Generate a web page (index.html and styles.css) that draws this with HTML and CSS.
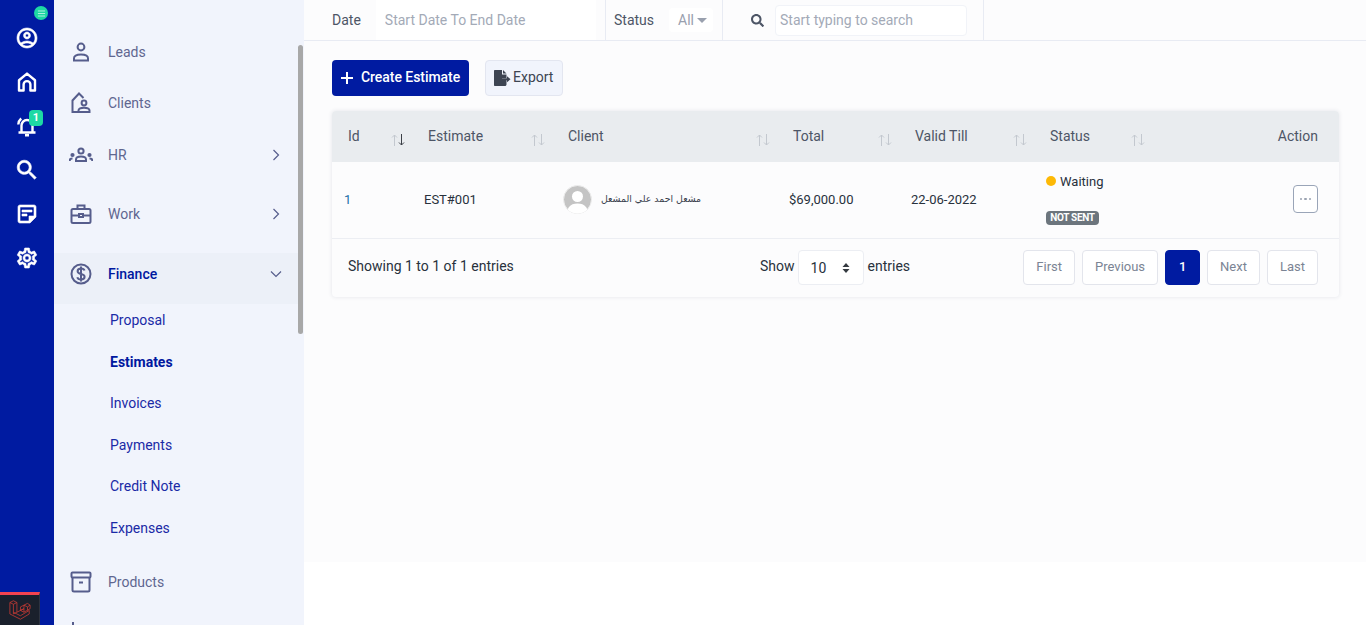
FILE: index.html
```html
<!DOCTYPE html>
<html lang="en">

<head>
    <meta charset="UTF-8">
    <meta name="viewport" content="width=device-width, initial-scale=1.0">
    <title>Estimates</title>
    <link rel="stylesheet" href="styles.css">
</head>

<body>
    <nav class="rail">
        <span class="rail-toggle">
            <svg viewBox="0 0 10 10" width="10" height="10"><path d="M1 2.2h8M1 5h8M1 7.8h8" stroke="#fff" stroke-opacity=".65" stroke-width="1.1"/></svg>
        </span>
        <a class="rail-link" href="#">
            <svg viewBox="0 0 24 24" width="24" height="24"><path class="solid" d="M12 2C6.48 2 2 6.48 2 12s4.48 10 10 10 10-4.48 10-10S17.52 2 12 2zM7.35 18.5C8.66 17.56 10.26 17 12 17s3.34.56 4.65 1.5C15.34 19.44 13.74 20 12 20s-3.34-.56-4.65-1.5zm10.79-1.38C16.45 15.8 14.32 15 12 15s-4.45.8-6.14 2.12C4.7 15.73 4 13.95 4 12c0-4.42 3.58-8 8-8s8 3.58 8 8c0 1.95-.7 3.73-1.86 5.12zM12 6c-1.93 0-3.5 1.57-3.5 3.5S10.07 13 12 13s3.5-1.57 3.5-3.5S13.93 6 12 6zm0 5c-.83 0-1.5-.67-1.5-1.5S11.17 8 12 8s1.5.67 1.5 1.5S12.83 11 12 11z"/></svg>
        </a>
        <a class="rail-link" href="#">
            <svg viewBox="0 0 24 24" width="24" height="24"><path class="line" d="M4 20.5V10.2L12 3.6l8 6.6v10.3h-4.6v-6a3.4 3.4 0 0 0-6.800 0v6z"/></svg>
        </a>
        <a class="rail-link" href="#">
            <svg viewBox="0 0 24 24" width="24" height="24"><path class="line" d="M6.500 18v-6.500a5.500 5.500 0 0 1 11 0V18M3.500 18.500h17M10 21.300h4M6.200 4.500C4.500 6 3.500 8 3.300 10.500M17.800 4.500c1.700 1.500 2.700 3.500 2.900 6"/></svg>
            <span class="rail-badge">1</span>
        </a>
        <a class="rail-link" href="#">
            <svg viewBox="0 0 24 24" width="26" height="26"><path class="solid" d="M15.500 14h-.79l-.28-.27C15.410 12.590 16 11.110 16 9.500 16 5.910 13.090 3 9.500 3S3 5.910 3 9.500 5.910 16 9.500 16c1.610 0 3.090-.59 4.230-1.570l.27.280v.79l5 4.990L20.490 19l-4.990-5zm-6 0C7.010 14 5 11.990 5 9.500S7.010 5 9.500 5 14 7.010 14 9.500 11.990 14 9.500 14z"/></svg>
        </a>
        <a class="rail-link" href="#">
            <svg viewBox="0 0 24 24" width="24" height="24"><path class="solid" d="M19 5v9h-5v5H5V5h14m0-2H5c-1.100 0-2 .9-2 2v14c0 1.100.9 2 2 2h10l6-6V5c0-1.100-.9-2-2-2zm-7 11H7v-2h5v2zm5-4H7V8h10v2z"/></svg>
        </a>
        <a class="rail-link" href="#">
            <svg viewBox="0 0 24 24" width="24" height="24"><path class="solid" d="M19.430 12.980c.04-.32.07-.64.07-.98 0-.34-.03-.66-.07-.98l2.110-1.650c.19-.15.24-.42.12-.64l-2-3.460c-.09-.16-.26-.25-.44-.25-.06 0-.12.01-.17.03l-2.490 1c-.52-.4-1.080-.73-1.690-.98l-.38-2.650C14.460 2.180 14.250 2 14 2h-4c-.25 0-.46.18-.49.42l-.38 2.650c-.61.25-1.170.59-1.690.98l-2.490-1c-.06-.02-.12-.03-.18-.03-.17 0-.34.09-.43.25l-2 3.460c-.13.22-.07.49.12.64l2.110 1.650c-.04.32-.07.65-.07.98 0 .33.03.66.07.98l-2.110 1.650c-.19.15-.24.42-.12.64l2 3.460c.09.16.26.25.44.25.06 0 .12-.01.17-.03l2.490-1c.52.4 1.080.73 1.690.98l.38 2.650c.03.24.24.42.49.42h4c.25 0 .46-.18.49-.42l.38-2.650c.61-.25 1.170-.59 1.690-.98l2.490 1c.06.02.12.03.18.03.17 0 .34-.09.43-.25l2-3.460c.12-.22.07-.49-.12-.64l-2.110-1.650zm-1.980-1.710c.04.31.05.52.05.73 0 .21-.02.43-.05.73l-.14 1.130.89.7 1.080.84-.7 1.210-1.270-.51-1.040-.42-.9.68c-.43.32-.84.56-1.250.73l-1.060.43-.16 1.130-.2 1.350h-1.400l-.19-1.350-.16-1.130-1.060-.43c-.43-.18-.83-.41-1.230-.71l-.91-.7-1.060.43-1.270.51-.7-1.210 1.080-.84.89-.7-.14-1.130c-.03-.31-.05-.54-.05-.74s.02-.43.05-.73l.14-1.130-.89-.7-1.080-.84.7-1.210 1.270.51 1.040.42.9-.68c.43-.32.84-.56 1.250-.73l1.060-.43.16-1.130.2-1.350h1.390l.19 1.350.16 1.130 1.060.43c.43.18.83.41 1.230.71l.91.7 1.060-.43 1.270-.51.7 1.210-1.070.85-.89.7.14 1.130zM12 8c-2.210 0-4 1.790-4 4s1.790 4 4 4 4-1.790 4-4-1.790-4-4-4zm0 6c-1.100 0-2-.9-2-2s.9-2 2-2 2 .9 2 2-.9 2-2 2z"/></svg>
        </a>
    </nav>

    <aside class="side">
        <ul class="menu">
            <li class="menu-item">
                <svg class="menu-icon" viewBox="0 0 24 24"><circle cx="12" cy="7" r="3.400"/><path d="M5 20.500v-2.200c0-2.200 2-3.800 7-3.800s7 1.600 7 3.800v2.200z"/></svg>
                Leads
            </li>
            <li class="menu-item">
                <svg class="menu-icon" viewBox="0 0 24 24"><path d="M10 21H3.500V9.500L10 2.500l4.500 4.500"/><circle cx="15" cy="12" r="2.400"/><path d="M9.500 21v-1.500c0-1.700 2-2.800 5.500-2.800s5.500 1.100 5.500 2.800V21z"/></svg>
                Clients
            </li>
            <li class="menu-item">
                <svg class="menu-icon" viewBox="0 0 24 24"><circle cx="12" cy="8" r="2.600"/><path d="M7 18v-1.500c0-1.800 2-2.900 5-2.900s5 1.100 5 2.900V18z"/><circle cx="3.500" cy="12" r="1.100"/><circle cx="20.500" cy="12" r="1.100"/><path d="M.8 18v-.8c0-1 1-1.800 2.700-1.800M23.200 18v-.8c0-1-1-1.800-2.700-1.800"/></svg>
                HR
                <svg class="chev" viewBox="0 0 12 12"><path d="M3.500 1l5 5-5 5"/></svg>
            </li>
            <li class="menu-item menu-item-work">
                <svg class="menu-icon" viewBox="0 0 24 24"><rect x="2.500" y="7" width="19" height="14" rx="1.500"/><path d="M8.500 7V3.500h7V7M2.500 13.500h7M14.500 13.500h7"/><rect x="10" y="12" width="4" height="3"/></svg>
                Work
                <svg class="chev" viewBox="0 0 12 12"><path d="M3.500 1l5 5-5 5"/></svg>
            </li>
            <li class="menu-item menu-item-open">
                <svg class="menu-icon" viewBox="0 0 24 24"><circle cx="12" cy="12" r="9.500"/><path d="M15.500 8.500C15 7 13.800 6.500 12 6.500c-2 0-3.400 1-3.400 2.700 0 3.800 7 1.900 7 5.500 0 1.800-1.500 2.800-3.600 2.800-2 0-3.300-.8-3.700-2.300M12 4.500v15"/></svg>
                <b>Finance</b>
                <svg class="chev" viewBox="0 0 12 12"><path d="M1 3.500l5 5 5-5"/></svg>
            </li>
            <li>
                <ul class="submenu">
                    <li>Proposal</li>
                    <li class="current">Estimates</li>
                    <li>Invoices</li>
                    <li>Payments</li>
                    <li>Credit Note</li>
                    <li>Expenses</li>
                </ul>
            </li>
            <li class="menu-item menu-item-products">
                <svg class="menu-icon" viewBox="0 0 24 24"><rect x="2.500" y="2.500" width="19" height="5" rx="1"/><path d="M3.500 7.500V20c0 .8.7 1.500 1.500 1.500h14c.8 0 1.500-.7 1.500-1.500V7.500M10 12.500h4"/></svg>
                Products
            </li>
            <li class="menu-item">
                <svg class="menu-icon" viewBox="0 0 24 24"><path d="M4 0v21h17"/></svg>
            </li>
        </ul>
        <div class="side-thumb"></div>
    </aside>

    <div class="main">
        <div class="main-inner">
            <header class="filters">
                <div class="filter filter-date">
                    <span class="filter-label">Date</span>
                    <input class="date-input" type="text" placeholder="Start Date To End Date">
                </div>
                <div class="filter filter-status">
                    <span class="filter-label">Status</span>
                    <span class="status-select">All<i class="caret"></i></span>
                </div>
                <div class="filter filter-search">
                    <svg viewBox="0 0 512 512" width="13" height="13"><path d="M505 442.700L405.300 343c-4.500-4.500-10.600-7-17-7H372c27.600-35.300 44-79.700 44-128C416 93.100 322.900 0 208 0S0 93.100 0 208s93.100 208 208 208c48.300 0 92.700-16.400 128-44v16.300c0 6.400 2.500 12.500 7 17l99.700 99.700c9.400 9.400 24.600 9.400 33.900 0l28.300-28.300c9.400-9.400 9.400-24.600.1-34zM208 336c-70.700 0-128-57.200-128-128 0-70.700 57.200-128 128-128 70.700 0 128 57.200 128 128 0 70.700-57.200 128-128 128z" fill="#4d5566"/></svg>
                    <input class="search-input" type="text" placeholder="Start typing to search">
                </div>
            </header>

            <section class="content">
                <div class="actions">
                    <button class="btn btn-primary">
                        <svg viewBox="0 0 12 12" width="12" height="12"><path d="M6 0v12M0 6h12" stroke="#fff" stroke-width="2"/></svg>
                        Create Estimate
                    </button>
                    <button class="btn btn-export">
                        <svg viewBox="0 0 17 16" width="17" height="16"><path d="M1 0h7v4.500h4.500V8H8v2h4.500v4.500c0 .8-.7 1.500-1.500 1.500H1c-.6 0-1-.4-1-1V1c0-.6.4-1 1-1zM9 0l3.500 3.500H9zM8 8.300h5V6.200l3.500 3-3.500 3v-2H8z" fill="#3d4452"/></svg>
                        Export
                    </button>
                </div>

                <div class="card">
                    <table class="estimates">
                        <colgroup>
                            <col class="col-id">
                            <col class="col-estimate">
                            <col class="col-client">
                            <col class="col-total">
                            <col class="col-valid">
                            <col class="col-status">
                            <col>
                        </colgroup>
                        <thead>
                            <tr>
                                <th><span class="th-inner">Id <svg class="sort" viewBox="0 0 14 14"><path class="up" d="M3.500 13V2M1 4.500L3.500 2 6 4.500"/><path class="down" d="M10.500 1v11M8 9.500l2.500 2.500 2.500-2.500"/></svg></span></th>
                                <th><span class="th-inner">Estimate <svg class="sort" viewBox="0 0 14 14"><path class="up" d="M3.500 13V2M1 4.500L3.500 2 6 4.500"/><path class="up" d="M10.500 1v11M8 9.500l2.500 2.500 2.500-2.500"/></svg></span></th>
                                <th><span class="th-inner">Client <svg class="sort" viewBox="0 0 14 14"><path class="up" d="M3.500 13V2M1 4.500L3.500 2 6 4.500"/><path class="up" d="M10.500 1v11M8 9.500l2.500 2.500 2.500-2.500"/></svg></span></th>
                                <th><span class="th-inner">Total <svg class="sort" viewBox="0 0 14 14"><path class="up" d="M3.500 13V2M1 4.500L3.500 2 6 4.500"/><path class="up" d="M10.500 1v11M8 9.500l2.500 2.500 2.500-2.500"/></svg></span></th>
                                <th><span class="th-inner">Valid Till <svg class="sort" viewBox="0 0 14 14"><path class="up" d="M3.500 13V2M1 4.500L3.500 2 6 4.500"/><path class="up" d="M10.500 1v11M8 9.500l2.500 2.500 2.500-2.500"/></svg></span></th>
                                <th><span class="th-inner">Status <svg class="sort" viewBox="0 0 14 14"><path class="up" d="M3.500 13V2M1 4.500L3.500 2 6 4.500"/><path class="up" d="M10.500 1v11M8 9.500l2.500 2.500 2.500-2.500"/></svg></span></th>
                                <th class="th-action">Action</th>
                            </tr>
                        </thead>
                        <tbody>
                            <tr>
                                <td class="cell-id">1</td>
                                <td>EST#001</td>
                                <td>
                                    <div class="client">
                                        <svg class="avatar" viewBox="0 0 29 29"><defs><clipPath id="avatarClip"><circle cx="14.500" cy="14.500" r="14"/></clipPath></defs><circle cx="14.500" cy="14.500" r="14" fill="#c4c4c4" stroke="#eee"/><g clip-path="url(#avatarClip)" fill="#fff"><circle cx="14.500" cy="11.500" r="5.500"/><path d="M4 29c0-7 4-10.500 10.500-10.500S25 22 25 29z"/></g></svg>
                                        <span class="client-name" dir="rtl">مشعل احمد علي المشعل</span>
                                    </div>
                                </td>
                                <td>$69,000.00</td>
                                <td>22-06-2022</td>
                                <td class="cell-status">
                                    <div class="status-line"><i class="dot"></i>Waiting</div>
                                    <span class="badge">NOT SENT</span>
                                </td>
                                <td class="cell-action"><button class="more"><i></i><i></i><i></i></button></td>
                            </tr>
                        </tbody>
                    </table>

                    <div class="table-footer">
                        <div class="table-info">Showing 1 to 1 of 1 entries</div>
                        <div class="table-length">
                            Show
                            <span class="length-select">10
                                <svg viewBox="0 0 8 12" width="8" height="12"><path d="M4 1l3.500 4h-7zM4 11L.5 7h7z" fill="#343a40"/></svg>
                            </span>
                            entries
                        </div>
                        <div class="pager">
                            <a class="page">First</a>
                            <a class="page">Previous</a>
                            <a class="page page-on">1</a>
                            <a class="page">Next</a>
                            <a class="page">Last</a>
                        </div>
                    </div>
                </div>
            </section>
        </div>
    </div>

    <div class="debug-tab">
        <svg viewBox="0 0 25 25" width="22" height="22"><path d="M1 4l4-2 4 2v11l-4 2M1 4l4 2 4-2M5 6v11M1 4v13l12 6 10-6v-4l-10 6-8-4M9 15l8-4M17 7l4-2 3 2v4l-7 4v-4M17 7v4M17 7l4 2 3-2M21 9v4M13 9l4-2M13 9v4l4-2M13 13l4 2" fill="none" stroke="#c93a34" stroke-width=".9" stroke-linejoin="round"/></svg>
    </div>
</body>

</html>
```

FILE: styles.css
```css
* {
    box-sizing: border-box;
}

html,
body {
    height: 100%;
}

body {
    margin: 0;
    display: flex;
    height: 625px;
    overflow: hidden;
    background-color: #fff;
    font-family: Roboto, 'Noto Sans', sans-serif;
    font-size: 14px;
    color: #28313c;
}

ul {
    list-style: none;
    margin: 0;
    padding: 0;
}

a {
    text-decoration: none;
}

/* Left icon rail */
.rail {
    position: relative;
    flex: 0 0 54px;
    display: flex;
    flex-direction: column;
    padding-top: 16px;
    background-color: #001ba1;
}

.rail-link {
    position: relative;
    display: flex;
    align-items: center;
    justify-content: center;
    height: 44px;
}

.rail-link .solid {
    fill: #fff;
    stroke: #fff;
    stroke-width: 0.6;
}

.rail-link .line {
    fill: none;
    stroke: #fff;
    stroke-width: 2.4;
    stroke-linejoin: round;
}

.rail-toggle {
    position: absolute;
    top: 6px;
    left: 34px;
    width: 14px;
    height: 14px;
    border-radius: 50%;
    background-color: #1dd9a4;
    display: flex;
    align-items: center;
    justify-content: center;
}

.rail-toggle svg {
    width: 9px;
    height: 9px;
}

.rail-badge {
    position: absolute;
    top: 6px;
    left: 29px;
    width: 14px;
    height: 16px;
    border-radius: 4px;
    background-color: #1dd9a4;
    color: #fff;
    font-size: 11px;
    font-weight: 700;
    line-height: 16px;
    text-align: center;
}

/* Secondary menu */
.side {
    position: relative;
    flex: 0 0 250px;
    overflow: hidden;
    padding-top: 26px;
    background-color: #f1f4fc;
}

.menu {
    width: 244px;
}

.menu-item {
    display: flex;
    align-items: center;
    gap: 15px;
    height: 51.500px;
    padding: 0 16px 0 15px;
    color: #5f6690;
}

.menu-item-work {
    height: 66px;
}

.menu-item-open {
    height: 51px;
    margin-top: 6px;
    padding-bottom: 9px;
    background-color: #ecf0f8;
}

.menu-item-open b {
    font-weight: 500;
    color: #00189f;
}

.menu-item-products {
    margin-top: 12.600px;
}

.menu-icon {
    flex: 0 0 24px;
    width: 24px;
    height: 24px;
    fill: none;
    stroke: #565d8c;
    stroke-width: 2;
}

.chev {
    width: 12px;
    height: 12px;
    margin-left: auto;
    fill: none;
    stroke: #565d8c;
    stroke-width: 1.200;
}

.submenu {
    display: flex;
    flex-direction: column;
    gap: 9.600px;
    padding: 0.400px 0 0 56px;
}

.submenu li {
    height: 32px;
    line-height: 32px;
    color: #1a2aa6;
}

.submenu .current {
    padding-top: 1px;
    font-weight: 700;
    color: #00189f;
}

.side-thumb {
    position: absolute;
    top: 45px;
    right: 1px;
    width: 5px;
    height: 289px;
    border-radius: 3px;
    background-color: #a8a8a8;
}

/* Main column */
.main {
    flex: 1;
    min-width: 0;
}

.main-inner {
    height: 562px;
    background-color: #fcfcfd;
}

.filters {
    display: flex;
    height: 41px;
    border-bottom: 1px solid #e8ebf3;
}

.filter {
    display: flex;
    align-items: center;
    border-right: 1px solid #e8ebf3;
}

.filter-label {
    color: #4d5566;
}

.filter-date {
    width: 302px;
    padding-left: 28px;
}

.date-input {
    width: 220px;
    height: 40px;
    margin-left: 15px;
    padding: 0 0 0 9px;
    border: 0;
    background-color: #fff;
    font: inherit;
}

.filter-status {
    width: 117px;
    padding-left: 8px;
}

.status-select {
    display: flex;
    align-items: center;
    gap: 3px;
    height: 24px;
    margin-left: 15px;
    padding: 0 0 0 9px;
    width: 44px;
    border-radius: 4px;
    background-color: #fff;
    color: #99a0ae;
}

.caret {
    border: 5px solid transparent;
    border-top-color: #99a0ae;
    border-bottom: 0;
}

.filter-search {
    width: 261px;
    padding-left: 28px;
}

.search-input {
    width: 192px;
    height: 31px;
    margin-left: 11px;
    padding: 0 0 0 4px;
    border: 1px solid #f1f3f8;
    border-radius: 4px;
    background-color: #fff;
    font: inherit;
}

input::placeholder {
    color: #a3aab7;
    opacity: 1;
}

input {
    outline: none;
}

.content {
    padding: 19px 27px 0 28px;
}

/* Buttons above the table */
.actions {
    display: flex;
    gap: 16px;
    margin-bottom: 15px;
}

.btn {
    display: flex;
    align-items: center;
    height: 36px;
    padding-bottom: 3px;
    border-radius: 4px;
    font-family: inherit;
    font-size: 14px;
}

.btn svg {
    margin-top: 2px;
}

.btn-primary {
    gap: 8px;
    width: 137px;
    padding-left: 9px;
    padding-right: 0;
    border: 0;
    background-color: #001ba1;
    color: #fff;
    font-weight: 500;
    letter-spacing: -0.05px;
}

.btn-export {
    gap: 2px;
    width: 78px;
    padding-left: 8px;
    padding-right: 0;
    border: 1px solid #e3e6f0;
    background-color: #f1f4fc;
    color: #3d4452;
}

/* Table card */
.card {
    border-radius: 4px;
    background-color: #fcfcfd;
    box-shadow: 0 0 4px rgba(40, 50, 80, 0.12);
}

.estimates {
    width: 100%;
    border-collapse: collapse;
    table-layout: fixed;
}

.col-id {
    width: 80px;
}

.col-estimate {
    width: 140px;
}

.col-client {
    width: 225px;
}

.col-total {
    width: 122px;
}

.col-valid {
    width: 135px;
}

.col-status {
    width: 118px;
}

.estimates th {
    height: 51px;
    padding: 1px 7px 0 16px;
    background-color: #e9ecef;
    font-weight: 400;
    text-align: left;
    color: #4d5566;
}

.estimates th:first-child {
    border-top-left-radius: 4px;
}

.estimates th:last-child {
    border-top-right-radius: 4px;
}

.th-inner {
    display: flex;
    justify-content: space-between;
}

.estimates .th-action {
    padding-right: 21px;
    padding-bottom: 2px;
    text-align: right;
}

.sort {
    width: 14px;
    height: 14px;
    margin-top: 5px;
    fill: none;
    stroke-width: 1;
}

.sort .up {
    stroke: #c3c8cf;
}

.sort .down {
    stroke: #3b3f46;
}

.estimates td {
    height: 76px;
    padding: 0 0 0 12px;
    border-bottom: 1px solid #eceef3;
    font-size: 13px;
}

.estimates .cell-id {
    color: #1c6fa8;
}

.client {
    display: flex;
    align-items: center;
    gap: 8px;
    margin-left: -1px;
}

.client-name {
    margin-top: -3px;
    margin-left: 1px;
    font-family: 'DejaVu Sans', serif;
    font-size: 9.400px;
    color: #3a414d;
}

.avatar {
    flex: 0 0 29px;
    width: 29px;
    height: 29px;
}

.estimates .cell-status {
    vertical-align: top;
    padding-top: 12px;
}

.status-line {
    display: flex;
    align-items: center;
    gap: 4px;
    height: 14px;
    margin-bottom: 23px;
}

.dot {
    width: 10px;
    height: 10px;
    border-radius: 50%;
    background-color: #fdb906;
}

.badge {
    display: block;
    width: 53px;
    height: 14px;
    border-radius: 4px;
    background-color: #6c757d;
    color: #fff;
    font-size: 10px;
    font-weight: 700;
    line-height: 14px;
    text-align: center;
    letter-spacing: -0.3px;
}

.estimates .cell-action {
    padding: 0 21px 2px 0;
    text-align: right;
}

.more {
    display: inline-flex;
    align-items: center;
    justify-content: center;
    gap: 2px;
    width: 25px;
    height: 28px;
    padding: 0;
    border: 1px solid #9aa5b8;
    border-radius: 4px;
    background-color: #fff;
}

.more i {
    width: 2.500px;
    height: 2.500px;
    border-radius: 50%;
    background-color: #9aa2b0;
}

/* Footer row */
.table-footer {
    display: flex;
    align-items: center;
    height: 58px;
    padding: 0 21px 0 16px;
}

.table-info {
    width: 412px;
    padding-bottom: 3px;
}

.table-length {
    display: flex;
    align-items: center;
    gap: 3px;
    padding-bottom: 3px;
}

.length-select {
    display: flex;
    align-items: center;
    justify-content: space-between;
    width: 66px;
    height: 35px;
    margin: 3px 1px 0 0;
    padding: 0 13px 0 12px;
    border: 1px solid #eceef3;
    border-radius: 4px;
    background-color: #fff;
}

.pager {
    display: flex;
    gap: 7px;
    margin-left: auto;
}

.page {
    display: flex;
    align-items: center;
    justify-content: center;
    min-width: 35px;
    height: 35px;
    padding: 0 12px 2px;
    border: 1px solid #e3e5ec;
    border-radius: 4px;
    background-color: #fff;
    font-size: 13px;
    color: #7b8494;
}

.page-on {
    border-color: #001ba1;
    background-color: #001ba1;
    color: #fff;
    font-weight: 500;
}

/* Debug tab stuck in the corner */
.debug-tab {
    position: absolute;
    left: 0;
    bottom: 0;
    width: 40px;
    height: 33px;
    padding: 4px 0 0 9px;
    border-top: 3px solid #f4434f;
    border-right: 1px solid #2c3240;
    background-color: #1a202c;
}
```
